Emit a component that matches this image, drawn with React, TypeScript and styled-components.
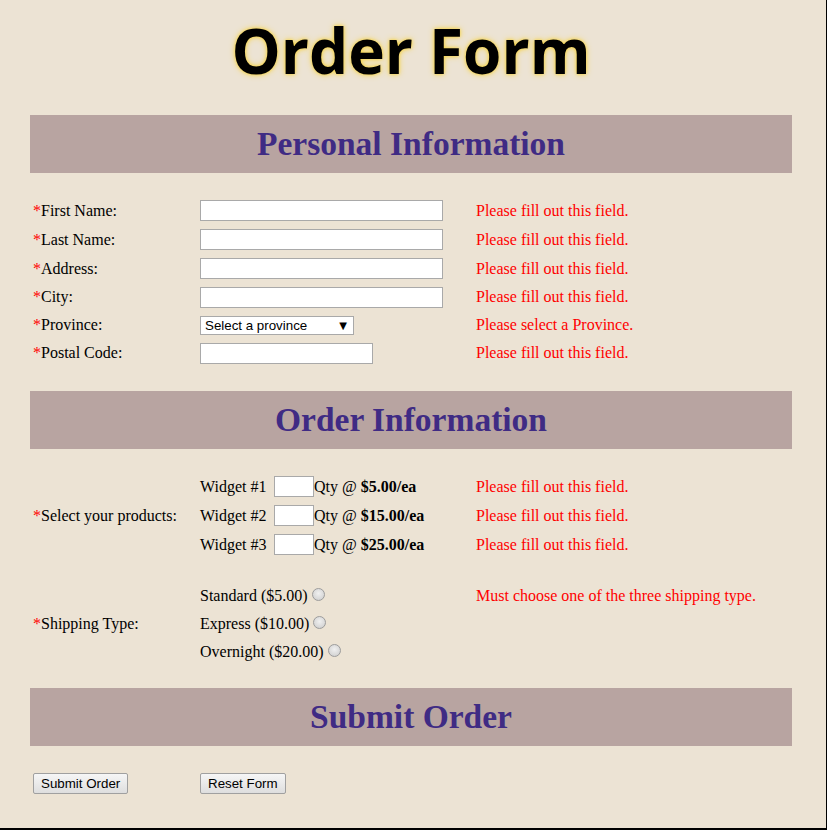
import React from "react";
import styled, { createGlobalStyle } from "styled-components";

const Global = createGlobalStyle`
  html, body { margin: 0; padding: 0; background: #ece3d4; }
  body { font-family: "Liberation Serif", "Times New Roman", serif; font-size: 16px; color: #000; }
`;

const Page = styled.div`
  width: 827px;
  height: 830px;
  box-sizing: border-box;
  background: #ece3d4;
  border-right: 1px solid #000;
  border-bottom: 2px solid #000;
  overflow: hidden;
`;

const Title = styled.h1`
  margin: 0;
  height: 100px;
  display: flex;
  align-items: center;
  justify-content: center;
  padding-right: 4px;
  font-family: "Open Sans", "Noto Sans", sans-serif;
  font-weight: 700;
  font-size: 62px;
  color: #000;
  text-shadow: 0 0 6px #f6d44a, 0 0 3px #f6d44a;
`;

const Form = styled.form`
  margin: 15px 0 0 30px;
  width: 762px;
`;

const SectionHeader = styled.h2`
  margin: 0;
  height: 58px;
  background: #b8a4a1;
  display: flex;
  align-items: center;
  justify-content: center;
  font-family: "Liberation Serif", "Times New Roman", serif;
  font-weight: 700;
  font-size: 33.5px;
  color: #3f2b84;
`;

const Grid = styled.div<{ $rows: string; $pb: number }>`
  display: grid;
  grid-template-columns: 170px 276px 1fr;
  grid-template-rows: ${(p) => p.$rows};
  padding: 23px 0 ${(p) => p.$pb}px;
`;

const Cell = styled.div<{ $row: string; $col: number }>`
  grid-row: ${(p) => p.$row};
  grid-column: ${(p) => p.$col};
  display: flex;
  align-items: center;
  padding-left: ${(p) => (p.$col === 1 ? 3 : 0)}px;
  white-space: nowrap;
`;

const Req = styled.span`
  color: #ff0000;
`;

const ErrorText = styled.span`
  color: #ff0000;
`;

const TextInput = styled.input<{ $w: number }>`
  width: ${(p) => p.$w}px;
  height: 21px;
  box-sizing: border-box;
  border: 1px solid #a9a9a9;
  background: #fff;
  margin: 0;
  padding: 1px 2px;
  font-family: "Liberation Sans", Arial, sans-serif;
  font-size: 13px;
`;

const SelectWrap = styled.div`
  position: relative;
  width: 154px;
  height: 19px;
`;

const Select = styled.select`
  appearance: none;
  -webkit-appearance: none;
  width: 154px;
  height: 19px;
  box-sizing: border-box;
  border: 1px solid #a9a9a9;
  border-radius: 0;
  background: #fff;
  margin: 0;
  padding: 0 0 0 4px;
  font-family: "Liberation Sans", Arial, sans-serif;
  font-size: 13.333px;
  color: #000;
`;

const Arrow = styled.span`
  position: absolute;
  right: 7px;
  top: 2px;
  font-family: "DejaVu Sans", sans-serif;
  font-size: 10px;
  line-height: 15px;
  pointer-events: none;
`;

const WidgetName = styled.span`
  width: 74px;
  display: inline-block;
`;

const QtyInput = styled.input`
  width: 40px;
  height: 21px;
  box-sizing: border-box;
  border: 1px solid #a9a9a9;
  background: #fff;
  margin: 0;
`;

const Radio = styled.input`
  appearance: none;
  -webkit-appearance: none;
  width: 13px;
  height: 13px;
  margin: -4px 0 0 4px;
  border-radius: 50%;
  border: 1px solid #9c9c9c;
  background: radial-gradient(circle at 50% 40%, #f0f0f0 0%, #d8d8d8 65%, #c8c8c8 100%);
  box-sizing: border-box;
`;

const ButtonRow = styled.div`
  display: grid;
  grid-template-columns: 170px 1fr;
  padding-top: 27px;
`;

const Button = styled.button<{ $col: number }>`
  justify-self: start;
  margin-left: ${(p) => (p.$col === 1 ? 3 : 0)}px;
  height: 21px;
  box-sizing: border-box;
  padding: 0 7px;
  border: 1px solid #a0a0a0;
  border-radius: 2px;
  background: linear-gradient(#f6f6f6, #dedede);
  font-family: "Liberation Sans", Arial, sans-serif;
  font-size: 13.333px;
  color: #000;
`;

const personal: { label: string; kind: "text" | "short" | "select"; err: string }[] = [
  { label: "First Name:", kind: "text", err: "Please fill out this field." },
  { label: "Last Name:", kind: "text", err: "Please fill out this field." },
  { label: "Address:", kind: "text", err: "Please fill out this field." },
  { label: "City:", kind: "text", err: "Please fill out this field." },
  { label: "Province:", kind: "select", err: "Please select a Province." },
  { label: "Postal Code:", kind: "short", err: "Please fill out this field." },
];

const widgets = [
  { name: "Widget #1", price: "$5.00/ea" },
  { name: "Widget #2", price: "$15.00/ea" },
  { name: "Widget #3", price: "$25.00/ea" },
];

const shipping = ["Standard ($5.00)", "Express ($10.00)", "Overnight ($20.00)"];

export default function App() {
  return (
    <>
      <Global />
      <Page>
        <Title>Order Form</Title>
        <Form onSubmit={(e) => e.preventDefault()}>
          <SectionHeader>Personal Information</SectionHeader>
          <Grid $rows="29px 29px 29px 28px 28px 28px" $pb={24}>
            {personal.map((f, i) => (
              <React.Fragment key={f.label}>
                <Cell $row={`${i + 1}`} $col={1}>
                  <Req>*</Req>
                  {f.label}
                </Cell>
                <Cell $row={`${i + 1}`} $col={2}>
                  {f.kind === "select" ? (
                    <SelectWrap>
                      <Select defaultValue="">
                        <option value="">Select a province</option>
                      </Select>
                      <Arrow>▼</Arrow>
                    </SelectWrap>
                  ) : (
                    <TextInput $w={f.kind === "short" ? 173 : 243} />
                  )}
                </Cell>
                <Cell $row={`${i + 1}`} $col={3}>
                  <ErrorText>{f.err}</ErrorText>
                </Cell>
              </React.Fragment>
            ))}
          </Grid>

          <SectionHeader>Order Information</SectionHeader>
          <Grid $rows="29px 29px 29px 23px 28px 28px 28px" $pb={22}>
            <Cell $row="1 / 4" $col={1}>
              <Req>*</Req>Select your products:
            </Cell>
            {widgets.map((w, i) => (
              <React.Fragment key={w.name}>
                <Cell $row={`${i + 1}`} $col={2}>
                  <WidgetName>{w.name}</WidgetName>
                  <QtyInput />
                  Qty @&nbsp;<b>{w.price}</b>
                </Cell>
                <Cell $row={`${i + 1}`} $col={3}>
                  <ErrorText>Please fill out this field.</ErrorText>
                </Cell>
              </React.Fragment>
            ))}
            <Cell $row="5 / 8" $col={1}>
              <Req>*</Req>Shipping Type:
            </Cell>
            {shipping.map((s, i) => (
              <Cell key={s} $row={`${i + 5}`} $col={2}>
                {s}
                <Radio type="radio" name="ship" />
              </Cell>
            ))}
            <Cell $row="5" $col={3}>
              <ErrorText>Must choose one of the three shipping type.</ErrorText>
            </Cell>
          </Grid>

          <SectionHeader>Submit Order</SectionHeader>
          <ButtonRow>
            <Button type="submit" $col={1}>Submit Order</Button>
            <Button type="reset" $col={2}>Reset Form</Button>
          </ButtonRow>
        </Form>
      </Page>
    </>
  );
}
